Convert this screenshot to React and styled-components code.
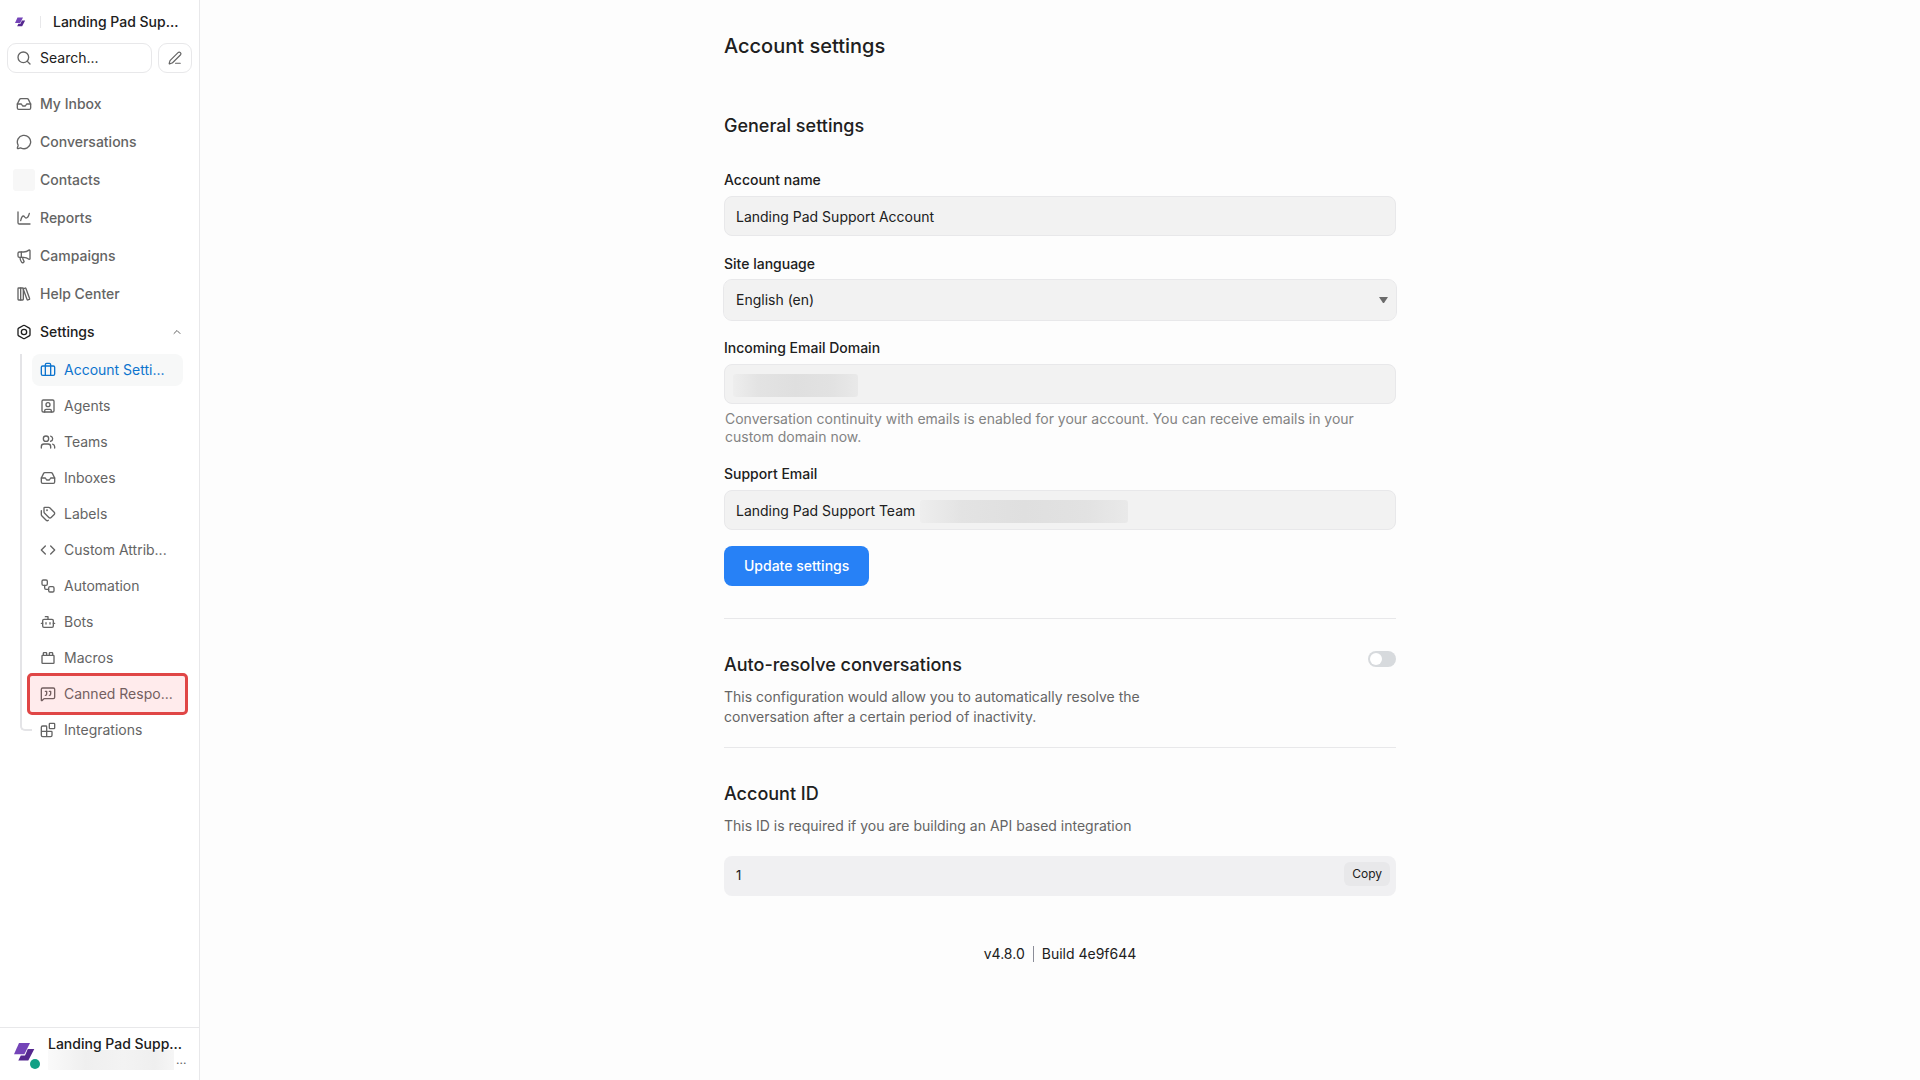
import React, { useState } from "react";
import styled, { createGlobalStyle } from "styled-components";
import {
    Blocks, Bolt, Bot, Briefcase, ChartSpline, ChevronUp, Code, Inbox, LibraryBig, Megaphone, MessageCircle,
    MessageSquareQuote, PenLine, Search, SquareUser, Tags, ToyBrick, Users, Workflow,
} from "lucide-react";

const color = {
    text: "#202020",
    text_secondary: "#646464",
    text_muted: "#838383",
    border: "#e8e8ea",
    field_bg: "#f2f2f2",
    page_bg: "#fdfdfd",
    primary: "#2781f6",
    active: "#0d74ce",
    danger: "#e04646",
};

const GlobalStyle = createGlobalStyle`
    * {
        box-sizing: border-box;
    }
    body {
        margin: 0;
        background-color: ${color.page_bg};
        color: ${color.text};
        font-family: Inter, "Liberation Sans", sans-serif;
        font-size: 14px;
        line-height: 20px;
    }
    button, input, select {
        margin: 0;
        font: inherit;
        color: inherit;
    }
    button {
        cursor: pointer;
    }
    h1, h2, p, ul {
        margin: 0;
        padding: 0;
    }
    ul {
        list-style: none;
    }
`

const Layout = styled.div`
    display: flex;
    min-height: 100vh;
`

const Sidebar = styled.aside`
    display: flex;
    flex-direction: column;
    flex: none;
    width: 200px;
    border-right: 1px solid ${color.border};
    background-color: white;
`

const AccountBar = styled.div`
    display: flex;
    align-items: center;
    height: 43px;
    padding: 0 8px 0 14px;
`

const BarSeparator = styled.span`
    width: 1px;
    height: 12px;
    margin: 0 12px 0 14px;
    background-color: ${color.border};
`

const AccountButton = styled.button`
    flex: 1;
    padding: 0;
    border: none;
    background: none;
    font-weight: 500;
    text-align: left;
    white-space: nowrap;
`

const SearchBar = styled.div`
    display: flex;
    gap: 6px;
    padding: 0 7px;
`

const SearchButton = styled.button`
    display: flex;
    align-items: center;
    flex: 1;
    gap: 8px;
    height: 30px;
    padding: 0 8px;
    border: 1px solid ${color.border};
    border-radius: 9px;
    background-color: white;

    svg {
        color: ${color.text_secondary};
    }
`

const ComposeButton = styled.button`
    display: flex;
    justify-content: center;
    align-items: center;
    width: 34px;
    height: 30px;
    padding: 0;
    border: 1px solid ${color.border};
    border-radius: 9px;
    background-color: white;
    color: ${color.text_secondary};
`

const Nav = styled.nav`
    flex: 1;
    padding: 15px 16px 0;
`

const NavList = styled.ul`
    display: flex;
    flex-direction: column;
    gap: 6px;
`

const NavLink = styled.a`
    display: flex;
    align-items: center;
    gap: 8px;
    height: 32px;
    color: ${(props) => props.$open? color.text: color.text_secondary};
    font-weight: 500;
    text-decoration: none;

    svg:last-child:not(:first-child) {
        margin-left: auto;
        color: ${color.text_secondary};
    }
`

const IconPlaceholder = styled.span`
    width: 22px;
    height: 22px;
    margin: 0 -3px;
    border-radius: 3px;
    background-color: #f7f7f7;
`

const SubList = styled.ul`
    position: relative;
    display: flex;
    flex-direction: column;
    gap: 4px;
    margin: 6px 0 0 16px;

    &::before {
        content: "";
        position: absolute;
        top: 0;
        bottom: 15px;
        left: -12px;
        width: 10px;
        border: solid #e4e4e7;
        border-width: 0 0 2px 2px;
        border-bottom-left-radius: 5px;
    }
`

const SubLink = styled.a`
    position: relative;
    display: flex;
    align-items: center;
    gap: 8px;
    height: 32px;
    padding: 0 8px;
    border-radius: 8px;
    background-color: ${(props) => props.$active? "#f7f8f8": "transparent"};
    color: ${(props) => props.$active? color.active: color.text_secondary};
    text-decoration: none;
    white-space: nowrap;

    svg {
        flex: none;
    }
`

const Highlight = styled.span`
    position: absolute;
    inset: -5px -5px;
    border: 3px solid ${color.danger};
    border-radius: 5px;
    background-color: rgba(255, 60, 70, 0.1);
`

const Profile = styled.div`
    display: flex;
    gap: 12px;
    height: 53px;
    padding: 6px 8px 0 12px;
    border-top: 1px solid ${color.border};
`

const Avatar = styled.div`
    position: relative;
    flex: none;
    width: 24px;
    height: 36px;
    padding-top: 6px;
`

const StatusDot = styled.span`
    position: absolute;
    right: -4px;
    bottom: 1px;
    width: 10px;
    height: 10px;
    border-radius: 50%;
    background-color: #12a085;
`

const ProfileInfo = styled.div`
    flex: 1;
`

const ProfileName = styled.p`
    position: relative;
    font-weight: 500;
    white-space: nowrap;
`

const ProfileMail = styled.p`
    display: flex;
    align-items: center;
    gap: 2px;
    height: 18px;
    margin-top: -3px;
    color: ${color.text_secondary};
    font-size: 12px;
    line-height: 14px;
`

const MailMask = styled.span`
    width: 126px;
    height: 20px;
    background: linear-gradient(90deg, #fafafa, #efefef 30%, #f3f3f3 60%, #efefef 85%, #f6f6f6);
`

const Main = styled.main`
    flex: 1;
    min-width: 0;
    padding: 0 24px;
`

const Content = styled.div`
    max-width: 672px;
    margin: 0 auto;
`

const PageTitle = styled.h1`
    padding: 32px 0 0;
    font-size: 20px;
    font-weight: 500;
    line-height: 28px;
`

const SectionTitle = styled.h2`
    font-size: 18px;
    font-weight: 500;
    line-height: 24px;
`

const Form = styled.form`
    padding: 54px 0 32px;
    border-bottom: 1px solid ${color.border};
`

const Fields = styled.div`
    display: flex;
    flex-direction: column;
    gap: 18px;
    margin: 32px 0 16px;
`

const Label = styled.label`
    display: block;
    margin-bottom: 6px;
    font-weight: 500;
`

const Control = styled.div`
    position: relative;
`

const Input = styled.input`
    display: block;
    width: 100%;
    height: 40px;
    padding: 0 11px;
    border: 1px solid ${color.border};
    border-radius: 8px;
    background-color: ${color.field_bg};
`

const Select = styled.select`
    appearance: none;
    display: block;
    width: 100%;
    height: 40px;
    padding: 0 12px;
    border: none;
    border-radius: 8px;
    outline: 1px solid ${color.border};
    background-color: ${color.field_bg};
`

const SelectArrow = styled.svg`
    position: absolute;
    top: 17px;
    right: 8px;
    width: 9px;
    height: 7px;
    pointer-events: none;
`

const Mask = styled.span`
    position: absolute;
    top: 10px;
    left: ${(props) => props.$left};
    width: ${(props) => props.$width};
    height: 23px;
    border-radius: 3px;
    background: linear-gradient(90deg, #eeeeee, #e3e3e3 20%, #dfdfdf 50%, #e2e2e2 80%, #e9e9e9);
`

const Help = styled.p`
    padding: 6px 1px 0;
    color: ${color.text_muted};
    line-height: 18px;
`

const SubmitButton = styled.button`
    height: 40px;
    padding: 0 20px;
    border: none;
    border-radius: 8px;
    background-color: ${color.primary};
    color: white;
    font-weight: 500;
`

const Section = styled.section`
    display: flex;
    justify-content: space-between;
    align-items: flex-start;
    padding: 32px 0 20px;
    border-bottom: ${(props) => props.$last? "none": `1px solid ${color.border}`};
`

const SectionText = styled.div`
    display: flex;
    flex-direction: column;
    gap: 10px;
    max-width: 448px;
    padding-top: 2px;
`

const Description = styled.p`
    color: ${color.text_secondary};
`

const Switch = styled.input`
    appearance: none;
    width: 28px;
    height: 16px;
    margin: 0;
    padding: 2px;
    border-radius: 8px;
    background-color: #d7dadd;
    cursor: pointer;

    &::before {
        content: "";
        display: block;
        width: 12px;
        height: 12px;
        border-radius: 50%;
        background-color: white;
    }
    &:checked {
        padding-left: 14px;
        background-color: ${color.primary};
    }
`

const CodeBox = styled.div`
    display: flex;
    justify-content: space-between;
    height: 40px;
    padding: 6px 6px 0 12px;
    border-radius: 8px;
    background-color: #f0f0f2;
`

const CodeValue = styled.code`
    font-family: inherit;
    font-size: 13px;
    line-height: 26px;
`

const CopyButton = styled.button`
    height: 24px;
    padding: 0 8px;
    border: none;
    border-radius: 6px;
    background-color: #e8e8ea;
    font-size: 12px;
`

const Footer = styled.footer`
    display: flex;
    justify-content: center;
    align-items: center;
    gap: 8px;
    padding: 48px 0;
`

const FooterSeparator = styled.span`
    width: 1px;
    height: 16px;
    background-color: #8b8d98;
`

const Logo = ({size}) => (
    <svg width={size} height={size} viewBox="0 0 24 24" aria-hidden="true">
        <path d="M7 3h11l-5.600 11.200H2z" fill="#7444b8" />
        <path d="M15.800 9h6.500l-6 11.500H6.300l2.500-5h4.200z" fill="#55288f" />
    </svg>
);

const navItems = [
    { name: "My Inbox", icon: Inbox },
    { name: "Conversations", icon: MessageCircle },
    { name: "Contacts" },
    { name: "Reports", icon: ChartSpline },
    { name: "Campaigns", icon: Megaphone },
    { name: "Help Center", icon: LibraryBig },
];

const settingItems = [
    { name: "Account Setti...", icon: Briefcase, active: true },
    { name: "Agents", icon: SquareUser },
    { name: "Teams", icon: Users },
    { name: "Inboxes", icon: Inbox },
    { name: "Labels", icon: Tags },
    { name: "Custom Attrib...", icon: Code },
    { name: "Automation", icon: Workflow },
    { name: "Bots", icon: Bot },
    { name: "Macros", icon: ToyBrick },
    { name: "Canned Respo...", icon: MessageSquareQuote, highlighted: true },
    { name: "Integrations", icon: Blocks },
];

const SettingItem = ({name, icon: Icon, active, highlighted}) => (
    <li>
        <SubLink href="#" $active={active}>
            <Icon size={16} />
            {name}
            {highlighted && <Highlight />}
        </SubLink>
    </li>
);

const SideMenu = () => (
    <Sidebar>
        <AccountBar>
            <Logo size={12} />
            <BarSeparator />
            <AccountButton type="button">Landing Pad Sup...</AccountButton>
        </AccountBar>
        <SearchBar>
            <SearchButton type="button"><Search size={16} />Search...</SearchButton>
            <ComposeButton type="button" aria-label="Compose"><PenLine size={14} /></ComposeButton>
        </SearchBar>
        <Nav>
            <NavList>
                {navItems.map(({name, icon: Icon}) => (
                    <li key={name}>
                        <NavLink href="#">
                            {Icon? <Icon size={16} />: <IconPlaceholder />}
                            {name}
                        </NavLink>
                    </li>
                ))}
                <li>
                    <NavLink href="#" $open>
                        <Bolt size={16} />
                        Settings
                        <ChevronUp size={12} />
                    </NavLink>
                    <SubList>
                        {settingItems.map((item) => <SettingItem key={item.name} {...item} />)}
                    </SubList>
                </li>
            </NavList>
        </Nav>
        <Profile>
            <Avatar>
                <Logo size={24} />
                <StatusDot />
            </Avatar>
            <ProfileInfo>
                <ProfileName>Landing Pad Supp...</ProfileName>
                <ProfileMail><MailMask />...</ProfileMail>
            </ProfileInfo>
        </Profile>
    </Sidebar>
);

const GeneralSettings = () => {
    const [name, setName] = useState("Landing Pad Support Account");
    const [email, setEmail] = useState("Landing Pad Support Team");
    const [domain, setDomain] = useState("");

    return (
        <Form onSubmit={(e) => e.preventDefault()}>
            <SectionTitle>General settings</SectionTitle>
            <Fields>
                <div>
                    <Label htmlFor="name">Account name</Label>
                    <Input id="name" value={name} onChange={(e) => setName(e.target.value)} />
                </div>
                <div>
                    <Label htmlFor="language">Site language</Label>
                    <Control>
                        <Select id="language" defaultValue="en">
                            <option value="en">English (en)</option>
                        </Select>
                        <SelectArrow viewBox="0 0 9 7"><path d="M0 0h9L5 6H4z" fill="#6b6b6b" /></SelectArrow>
                    </Control>
                </div>
                <div>
                    <Label htmlFor="domain">Incoming Email Domain</Label>
                    <Control>
                        <Input id="domain" value={domain} onChange={(e) => setDomain(e.target.value)} />
                        <Mask $left="9px" $width="125px" />
                    </Control>
                    <Help>
                        Conversation continuity with emails is enabled for your account. You can receive emails in your custom domain now.
                    </Help>
                </div>
                <div>
                    <Label htmlFor="email">Support Email</Label>
                    <Control>
                        <Input id="email" value={email} onChange={(e) => setEmail(e.target.value)} />
                        <Mask $left="196px" $width="208px" />
                    </Control>
                </div>
            </Fields>
            <SubmitButton type="submit">Update settings</SubmitButton>
        </Form>
    );
};

const App = () => {
    return (
        <>
            <GlobalStyle />
            <Layout>
                <SideMenu />
                <Main>
                    <Content>
                        <PageTitle>Account settings</PageTitle>
                        <GeneralSettings />
                        <Section>
                            <SectionText>
                                <SectionTitle as="label" htmlFor="auto-resolve">Auto-resolve conversations</SectionTitle>
                                <Description>
                                    This configuration would allow you to automatically resolve the conversation after a certain period of inactivity.
                                </Description>
                            </SectionText>
                            <Switch type="checkbox" role="switch" id="auto-resolve" />
                        </Section>
                        <Section $last>
                            <SectionText>
                                <SectionTitle>Account ID</SectionTitle>
                                <Description>This ID is required if you are building an API based integration</Description>
                            </SectionText>
                        </Section>
                        <CodeBox>
                            <CodeValue>1</CodeValue>
                            <CopyButton type="button">Copy</CopyButton>
                        </CodeBox>
                        <Footer>
                            <span>v4.8.0</span>
                            <FooterSeparator />
                            <span>Build 4e9f644</span>
                        </Footer>
                    </Content>
                </Main>
            </Layout>
        </>
    );
};

export default App;
